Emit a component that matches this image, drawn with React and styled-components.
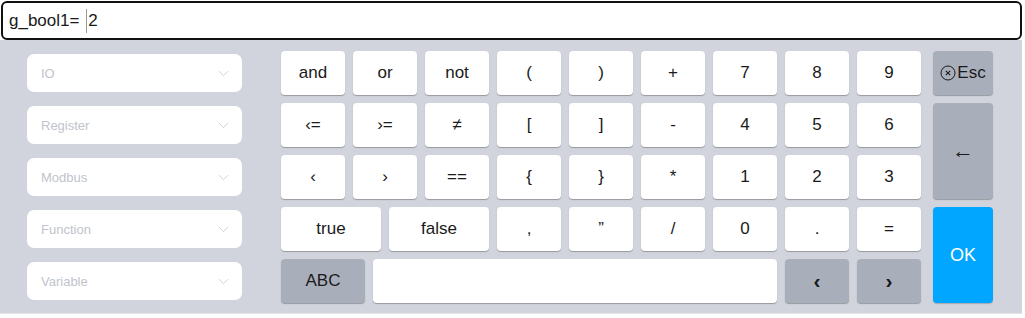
import React from 'react'
import styled, { createGlobalStyle } from 'styled-components'
import { ChevronDown } from 'lucide-react'

const GlobalStyle = createGlobalStyle`
  body {
    margin: 0;
    background: #ffffff;
    font-family: "Liberation Sans", Arial, sans-serif;
  }
`

const selects = ['IO', 'Register', 'Modbus', 'Function', 'Variable']

const rows = [
  ['and', 'or', 'not', '(', ')', '+', '7', '8', '9'],
  ['\u2039=', '\u203a=', '\u2260', '[', ']', '-', '4', '5', '6'],
  ['\u2039', '\u203a', '==', '{', '}', '*', '1', '2', '3'],
]

const CircleX = () => (
  <EscIcon width="16" height="16" viewBox="0 0 16 16">
    <circle cx="8" cy="8" r="7" fill="none" stroke="#1a1a1a" strokeWidth="1" />
    <path d="M5.8 5.8 L10.2 10.2 M10.2 5.8 L5.8 10.2" stroke="#1a1a1a" strokeWidth="1.1" />
  </EscIcon>
)

function App() {
  return (
    <>
      <GlobalStyle />
      <Wrapper>
        <Expression>
          g_bool1=&nbsp;<Caret />2
        </Expression>
        <Panel>
          <SelectColumn>
            {selects.map(s => (
              <Select key={s}>
                <span>{s}</span>
                <ChevronDown size={17} strokeWidth={1.1} color="#c0c4cc" />
              </Select>
            ))}
          </SelectColumn>
          <Keys>
            {rows.flat().map((k, i) => (
              <Key key={i}>{k}</Key>
            ))}
            <SplitRow $cols={3} $first="1fr">
              <Key>true</Key>
              <Key>false</Key>
            </SplitRow>
            <Key>,</Key>
            <Key>{'\u201d'}</Key>
            <Key>/</Key>
            <Key>0</Key>
            <Key>.</Key>
            <Key>=</Key>
            <SplitRow $cols={7} $first="84px">
              <Key $dark>ABC</Key>
              <Key />
            </SplitRow>
            <Key $dark $bold $size={21}>{'\u2039'}</Key>
            <Key $dark $bold $size={21}>{'\u203a'}</Key>
          </Keys>
          <SideKeys>
            <Key $dark>
              <CircleX />Esc
            </Key>
            <Key $dark $rows={2} $size={22}>{'\u2190'}</Key>
            <OkKey>OK</OkKey>
          </SideKeys>
        </Panel>
      </Wrapper>
    </>
  )
}
export default App

const Wrapper = styled.div`
  width: 1025px;
  height: 318px;
  padding-top: 1px;
  box-sizing: border-box;
`
const Expression = styled.div`
  margin-left: 1px;
  width: 1021px;
  height: 39px;
  box-sizing: border-box;
  border: 2px solid #111;
  border-radius: 6px;
  display: flex;
  align-items: center;
  padding-left: 6px;
  font-size: 17px;
  color: #1a1a1a;
  background: #fff;
`
const Caret = styled.span`
  display: inline-block;
  width: 1px;
  height: 24px;
  background: #999;
  margin: 0 1px 0 2px;
`
const Panel = styled.div`
  width: 1022px;
  height: 274px;
  box-sizing: border-box;
  background: #d1d4dc;
  display: flex;
  padding: 11px 0 0 27px;
  border-bottom: 1px solid #e2e4e8;
`
const SelectColumn = styled.div`
  width: 215px;
  padding-top: 3px;
  display: flex;
  flex-direction: column;
  gap: 14px;
`
const Select = styled.div`
  height: 38px;
  background: #fff;
  border-radius: 7px;
  display: flex;
  align-items: center;
  justify-content: space-between;
  padding: 0 10px 0 14px;
  font-size: 13px;
  color: #c0c4cc;
`
const Keys = styled.div`
  margin-left: 39px;
  display: grid;
  grid-template-columns: repeat(9, 64px);
  grid-template-rows: repeat(5, 44px);
  gap: 8px;
`
const Key = styled.div`
  grid-row: span ${p => p.$rows || 1};
  background: ${p => (p.$dark ? '#a9afba' : '#ffffff')};
  border-radius: 4px;
  box-shadow: 0 1px 1px rgba(0, 0, 0, 0.28);
  display: flex;
  align-items: center;
  justify-content: center;
  font-size: ${p => p.$size || 17}px;
  font-weight: ${p => (p.$bold ? 'bold' : 'normal')};
  color: #1a1a1a;
`
const EscIcon = styled.svg`
  margin-right: 1px;
`
const SplitRow = styled.div`
  grid-column: span ${p => p.$cols};
  display: grid;
  grid-template-columns: ${p => p.$first} 1fr;
  gap: 8px;
`
const SideKeys = styled.div`
  margin-left: 12px;
  width: 60px;
  display: grid;
  grid-template-rows: repeat(5, 44px);
  gap: 8px;
`
const OkKey = styled.div`
  grid-row: span 2;
  background: #00a6ff;
  border-radius: 4px;
  box-shadow: 0 1px 1px rgba(0, 0, 0, 0.2);
  display: flex;
  align-items: center;
  justify-content: center;
  font-size: 18px;
  color: #fff;
`
